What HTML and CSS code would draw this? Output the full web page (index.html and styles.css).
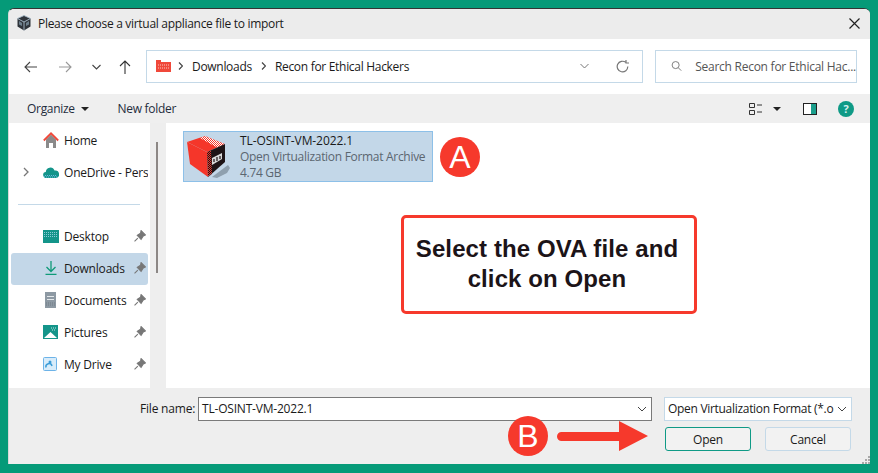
FILE: index.html
```html
<!DOCTYPE html>
<html lang="en">
<head>
    <meta charset="UTF-8">
    <title>Please choose a virtual appliance file to import</title>
    <link rel="stylesheet" href="styles.css">
</head>
<body>
    <div id="dialog">
        <div id="titlebar">
            <svg class="app-icon" width="16" height="16" viewBox="0 0 16 16">
                <path d="M8 .5l6.500 3v8L8 15.500 1.500 11.500v-8z" fill="#2f343a"/>
                <path d="M8 .5L1.500 3.500 8 7l6.500-3.500zM8 7v8.500" fill="none" stroke="#a9bccb" stroke-width=".9"/>
                <path d="M3 6l3 2v3L3 9.500zM13 6l-3 2v3l3-1.500z" fill="#6d7f8c"/>
            </svg>
            <span class="title">Please choose a virtual appliance file to import</span>
            <svg class="close" width="11" height="11" viewBox="0 0 11 11"><path d="M.5.5l10 10M10.500.5l-10 10" stroke="#222" stroke-width="1.200"/></svg>
        </div>

        <div id="navbar">
            <svg class="nav-btn back" width="13" height="12" viewBox="0 0 13 12"><path d="M13 6H1M6 1L1 6l5 5" fill="none" stroke="#444" stroke-width="1.100"/></svg>
            <svg class="nav-btn fwd" width="13" height="12" viewBox="0 0 13 12"><path d="M0 6h12M7 1l5 5-5 5" fill="none" stroke="#999" stroke-width="1.100"/></svg>
            <svg class="nav-btn down" width="9" height="6" viewBox="0 0 9 6"><path d="M.5 1l4 4 4-4" fill="none" stroke="#444" stroke-width="1.100"/></svg>
            <svg class="nav-btn up" width="12" height="14" viewBox="0 0 12 14"><path d="M6 14V1M1 6l5-5 5 5" fill="none" stroke="#333" stroke-width="1.100"/></svg>
            <div id="address">
                <svg class="addr-folder" width="15" height="12" viewBox="0 0 15 12"><path d="M0 0h5v2h10v10H0z" fill="#f0483a"/><path d="M2 5h11M2 8h11" stroke="#f7c9c2" stroke-dasharray="1 1"/></svg>
                <svg width="5" height="8" viewBox="0 0 5 8"><path d="M1 .5L4.500 4 1 7.500" fill="none" stroke="#444" stroke-width="1.200"/></svg>
                <span>Downloads</span>
                <svg width="5" height="8" viewBox="0 0 5 8"><path d="M1 .5L4.500 4 1 7.500" fill="none" stroke="#444" stroke-width="1.200"/></svg>
                <span>Recon for Ethical Hackers</span>
                <svg class="addr-down" width="9" height="6" viewBox="0 0 9 6"><path d="M.5 1l4 4 4-4" fill="none" stroke="#777" stroke-width="1"/></svg>
                <svg width="13" height="13" viewBox="0 0 13 13"><path d="M11.800 6.500a5.300 5.300 0 1 1-2-4.100M10 0v3H13" fill="none" stroke="#777" stroke-width="1.200"/></svg>
            </div>
            <div id="search">
                <svg width="12" height="12" viewBox="0 0 12 12"><circle cx="5" cy="5" r="3.800" fill="none" stroke="#777"/><path d="M7.800 7.800L11 11" stroke="#777"/></svg>
                <span>Search Recon for Ethical Hac...</span>
            </div>
        </div>

        <div id="toolbar">
            <span class="tool">Organize <i class="caret"></i></span>
            <span class="tool">New folder</span>
            <div class="tool-right">
                <svg width="13" height="12" viewBox="0 0 13 12"><path d="M.5.500h5v4h-5zM.5 7.500h5v4h-5zM8 2h5M8 9h5" fill="none" stroke="#333"/></svg>
                <i class="caret"></i>
                <svg class="pane" width="14" height="12" viewBox="0 0 14 12"><rect x=".5" y=".5" width="13" height="11" fill="#fff" stroke="#222"/><rect x="8" y="1" width="5" height="10" fill="#1a9e8c"/></svg>
                <svg class="help" width="16" height="16" viewBox="0 0 16 16"><circle cx="8" cy="8" r="8" fill="#0f9a86"/><text x="8" y="12" text-anchor="middle" class="help-mark">?</text></svg>
            </div>
        </div>

        <div id="body">
            <div id="sidebar">
                <div class="side-item">
                    <svg class="side-icon" width="16" height="16" viewBox="0 0 16 16"><path d="M3 7.500l5-5 5 5V16H10v-5H6v5H3z" fill="#8a8a8a"/><path d="M.8 8.500L8 1.300l7.200 7.200" fill="none" stroke="#f0483a" stroke-width="1.800"/></svg>
                    <span>Home</span>
                </div>
                <div class="side-item">
                    <svg class="expander" width="6" height="10" viewBox="0 0 6 10"><path d="M1 1l4 4-4 4" fill="none" stroke="#777" stroke-width="1.300"/></svg>
                    <svg class="side-icon" width="16" height="11" viewBox="0 0 16 11"><path d="M3.500 11a3 3 0 0 1-.7-6A4.500 4.500 0 0 1 11.500 3.500 3.800 3.800 0 0 1 13 11z" fill="#14958a"/><path d="M2 8.500h12M1 10h14" stroke="#6db8e0" stroke-dasharray="1 1"/></svg>
                    <span class="clip">OneDrive - Personal</span>
                </div>
                <div class="side-rule"></div>
                <div class="side-item">
                    <svg class="side-icon" width="16" height="13" viewBox="0 0 16 13"><rect width="16" height="13" fill="#14958a"/><path d="M1 2.500h14M1 4.500h14M1 6.500h14" stroke="#8cc9d8" stroke-dasharray="1 1"/></svg>
                    <span>Desktop</span>
                    <svg class="pin" width="12" height="12" viewBox="0 0 11 11"><path d="M6.500.5l4 4-2 1-2 3-3.500-3.500 3-2zM3.500 7.500L.5 10.500" fill="#777" stroke="#777"/></svg>
                </div>
                <div class="side-item active">
                    <svg class="side-icon narrow" width="12" height="14" viewBox="0 0 12 14"><path d="M6 0v10M1.500 6L6 10.500 10.500 6M.5 13.300h11" fill="none" stroke="#0f9a78" stroke-width="1.300"/></svg>
                    <span>Downloads</span>
                    <svg class="pin" width="12" height="12" viewBox="0 0 11 11"><path d="M6.500.5l4 4-2 1-2 3-3.500-3.500 3-2zM3.500 7.500L.5 10.500" fill="#777" stroke="#777"/></svg>
                </div>
                <div class="side-item">
                    <svg class="side-icon narrow" width="11" height="16" viewBox="0 0 11 16"><rect width="11" height="16" fill="#8d99a3"/><path d="M2 4.500h7M2 7.500h7" stroke="#e4e8ea"/><path d="M1 11h9M1 13h9" stroke="#6f7a84" stroke-dasharray="1 1"/></svg>
                    <span>Documents</span>
                    <svg class="pin" width="12" height="12" viewBox="0 0 11 11"><path d="M6.500.5l4 4-2 1-2 3-3.500-3.500 3-2zM3.500 7.500L.5 10.500" fill="#777" stroke="#777"/></svg>
                </div>
                <div class="side-item">
                    <svg class="side-icon" width="15" height="14" viewBox="0 0 15 14"><rect width="15" height="14" fill="#14958a"/><path d="M1 13l6.500-6 6.500 6z" fill="#fff"/><path d="M8 3h5M9 5h3" stroke="#bfe6e0" stroke-dasharray="1 1"/></svg>
                    <span>Pictures</span>
                    <svg class="pin" width="12" height="12" viewBox="0 0 11 11"><path d="M6.500.5l4 4-2 1-2 3-3.500-3.500 3-2zM3.500 7.500L.5 10.500" fill="#777" stroke="#777"/></svg>
                </div>
                <div class="side-item">
                    <svg class="side-icon" width="14" height="14" viewBox="0 0 14 14"><rect x=".5" y=".5" width="13" height="13" rx="1" fill="#d8ecfa" stroke="#6db3e8"/><path d="M3 10.500a3 3 0 0 1 6-1.500" fill="none" stroke="#3c9dd8" stroke-width="1.500"/><circle cx="7" cy="5" r="1.500" fill="#3c9dd8"/></svg>
                    <span>My Drive</span>
                    <svg class="pin" width="12" height="12" viewBox="0 0 11 11"><path d="M6.500.5l4 4-2 1-2 3-3.500-3.500 3-2zM3.500 7.500L.5 10.500" fill="#777" stroke="#777"/></svg>
                </div>
            </div>
            <div id="scrollbar"><div class="thumb"></div></div>
            <div id="files">
                <div class="file-row">
                    <svg class="file-icon" width="45" height="46" viewBox="185 135 45 46">
                        <defs>
                            <pattern id="dots" width="2" height="2" patternUnits="userSpaceOnUse">
                                <rect width="1" height="1" fill="#fff"/>
                                <rect x="1" y="1" width="1" height="1" fill="#fff"/>
                            </pattern>
                            <pattern id="reddots" width="2" height="2" patternUnits="userSpaceOnUse">
                                <rect width="1" height="1" fill="#e8392c"/>
                                <rect x="1" y="1" width="1" height="1" fill="#e8392c"/>
                            </pattern>
                        </defs>
                        <path d="M212 178l16-12 2 3-3 5-10 5z" fill="#8fa0ae"/>
                        <path d="M187 143l18-6 20 8-18 8z" fill="#f5362a"/>
                        <path d="M200 139l5-2 20 8-8 3.500z" fill="url(#dots)"/>
                        <path d="M187 143l20 10 1 25-18-13z" fill="#f5362a"/>
                        <path d="M207 153l18-8v18l-17 15z" fill="#1e1416"/>
                        <path d="M207 153l4-2 1 24-4 3z" fill="url(#reddots)"/>
                        <path d="M212 159l10-5v6l-10 6z" fill="#d8d8d8"/>
                        <path d="M214 160v3M217 158v4M220 157v3" stroke="#1e1416" stroke-width="1.200"/>
                    </svg>
                    <div class="file-text">
                        <div class="file-name">TL-OSINT-VM-2022.1</div>
                        <div class="file-meta">Open Virtualization Format Archive</div>
                        <div class="file-meta">4.74 GB</div>
                    </div>
                </div>
            </div>
        </div>

        <div id="footer">
            <div class="foot-row">
                <label>File name:</label>
                <div class="name-box">
                    <span>TL-OSINT-VM-2022.1</span>
                    <svg width="10" height="6" viewBox="0 0 10 6"><path d="M1 1l4 4 4-4" fill="none" stroke="#444" stroke-width="1"/></svg>
                </div>
                <div class="type-box">
                    <span>Open Virtualization Format (*.o</span>
                    <svg width="10" height="6" viewBox="0 0 10 6"><path d="M1 1l4 4 4-4" fill="none" stroke="#444" stroke-width="1"/></svg>
                </div>
            </div>
            <div class="foot-row buttons">
                <button class="btn primary">Open</button>
                <button class="btn">Cancel</button>
            </div>
        </div>

        <svg class="grip" width="8" height="8" viewBox="0 0 8 8"><path d="M6 0h2v2H6zM3 3h2v2H3zM6 3h2v2H6zM0 6h2v2H0zM3 6h2v2H3zM6 6h2v2H6z" fill="#a8a8a8"/></svg>

        <!-- annotations on top of the screenshot -->
        <div class="badge badge-a">A</div>
        <div class="note">Select the OVA file and click on Open</div>
        <div class="badge badge-b">B</div>
        <svg class="arrow" width="91" height="30" viewBox="0 0 91 30"><path d="M4.500 11H62V0l29 15-29 15V20H4.500a4.500 4.500 0 0 1 0-9z" fill="#f6392c"/></svg>
    </div>
</body>
</html>
```

FILE: styles.css
```css
html, body { margin: 0; padding: 0; height: 100%; }
body {
    background: #059a78;
    font-family: "Open Sans", "Noto Sans", sans-serif;
    font-size: 12px;
    color: #1a1a1a;
    overflow: hidden;
}

#dialog {
    position: relative;
    margin: 8px 8px 0;
    width: 862px;
    height: 456px;
    box-sizing: border-box;
    border-top: 1px solid #333;
    border-left: 1px solid #d8d8d8;
    border-radius: 6px 6px 0 0;
    background: #eeeeee;
    display: flex;
    flex-direction: column;
    overflow: hidden;
}

#titlebar {
    height: 30px;
    flex: none;
    box-sizing: border-box;
    display: flex;
    align-items: center;
    padding: 0 10px 2px 7px;
    background: #ececec;
}
.app-icon { margin-right: 6px; }
.title { flex: 1; letter-spacing: -0.3px; }

#navbar {
    height: 55px;
    flex: none;
    display: flex;
    align-items: center;
    background: #fff;
    padding-left: 15px;
}
.nav-btn { flex: none; }
.fwd { margin-left: 22px; }
.down { margin-left: 20px; }
.up { margin-left: 18px; }

#address, #search {
    height: 33px;
    box-sizing: border-box;
    border: 1px solid #c4d9e8;
    display: flex;
    align-items: center;
    flex: none;
    margin-top: -1px;
    letter-spacing: -0.3px;
    white-space: nowrap;
}
#address {
    width: 497px;
    margin-left: 15px;
    padding: 0 13px 0 9px;
    gap: 9px;
}
.addr-folder { margin-right: -2px; }
.addr-down { margin-left: auto; margin-right: 18px; }
#search {
    width: 202px;
    margin-left: 12px;
    padding-left: 15px;
    gap: 13px;
    color: #555;
    letter-spacing: -0.25px;
}

#toolbar {
    height: 29px;
    flex: none;
    display: flex;
    align-items: center;
    background: #efefef;
    padding-left: 18px;
}
.tool { margin-right: 29px; letter-spacing: -0.3px; color: #1f2d3d; }
.caret {
    display: inline-block;
    border-left: 4px solid transparent;
    border-right: 4px solid transparent;
    border-top: 4px solid #222;
    margin-left: 3px;
    vertical-align: 2px;
}
.tool-right {
    margin-left: auto;
    display: flex;
    align-items: center;
    margin-right: 16px;
}
.tool-right .caret { margin-left: 11px; vertical-align: 0; }
.pane { margin-left: 22px; }
.help { margin-left: 21px; }
.help-mark { font-size: 11px; font-weight: bold; fill: #d8f0ee; }

#body {
    flex: 1;
    min-height: 0;
    display: flex;
    background: #fff;
}
#sidebar {
    width: 141px;
    flex: none;
    padding: 2px 2px 0;
    box-sizing: border-box;
    overflow: hidden;
}
.side-item {
    height: 32px;
    box-sizing: border-box;
    display: flex;
    align-items: center;
    position: relative;
    padding: 0 0 2px 33px;
    white-space: nowrap;
    letter-spacing: -0.2px;
    border-radius: 3px;
}
.side-item.active { background: #c3d7e8; }
.side-icon { position: absolute; left: 32px; }
.side-icon.narrow { left: 34px; }
.side-item span { margin-left: 20px; }
.clip { overflow: hidden; width: 84px; flex: none; }
.expander { position: absolute; left: 12px; }
.pin { position: absolute; left: 123px; }
.side-rule {
    height: 1px;
    background: #c4d9e8;
    margin: 15px 8px 16px 7px;
}

#scrollbar {
    width: 16px;
    flex: none;
    background: #eeeeee;
}
.thumb {
    width: 2px;
    height: 131px;
    margin: 19px 0 0 6px;
    background: #8c8785;
}

#files {
    flex: 1;
    padding: 8px 0 0 16px;
    margin-left: 1px;
}
.file-row {
    width: 250px;
    height: 51px;
    box-sizing: border-box;
    border: 1px solid #8dc0e8;
    background: #c3d7e8;
    display: flex;
    align-items: center;
    padding-left: 1px;
}
.file-icon { flex: none; }
.file-text { margin-left: 10px; padding-top: 1px; line-height: 16px; white-space: nowrap; letter-spacing: -0.3px; }
.file-name { letter-spacing: -0.1px; }
.file-meta { color: #5b6670; }

#footer {
    height: 76px;
    flex: none;
    background: #eeeeee;
    padding-top: 9px;
    box-sizing: border-box;
}
.foot-row { display: flex; align-items: center; }
.foot-row label { margin: -2px 0 0 131px; width: 58px; letter-spacing: -0.2px; }
.name-box, .type-box {
    height: 24px;
    box-sizing: border-box;
    background: #fff;
    display: flex;
    align-items: center;
    justify-content: space-between;
    white-space: nowrap;
}
.name-box {
    width: 454px;
    border: 1px solid #7a7a7a;
    padding: 0 4px 1px 3px;
    letter-spacing: -0.2px;
}
.type-box {
    width: 188px;
    margin-left: 12px;
    border: 1px solid #c4d9e8;
    padding: 0 4px 1px 3px;
    letter-spacing: -0.3px;
}
.buttons { margin-top: 6px; padding-left: 656px; gap: 14px; }
.btn {
    width: 86px;
    height: 24px;
    padding: 0;
    font: inherit;
    letter-spacing: -0.2px;
    color: #1a1a1a;
    background: #f2f2f2;
    border: 1px solid #c4d9e8;
    border-radius: 3px;
}
.btn.primary { border-color: #0f9a86; }

.grip { position: absolute; right: 0; bottom: 0; }

.badge {
    position: absolute;
    width: 40px;
    height: 40px;
    border-radius: 50%;
    background: #f6392c;
    color: #fff;
    font-family: "Liberation Sans", Arial, sans-serif;
    font-size: 32px;
    line-height: 40px;
    text-align: center;
}
.badge-a { left: 431px; top: 128px; }
.badge-b { left: 499px; top: 407px; }
.arrow { position: absolute; left: 548px; top: 412px; }
.note {
    position: absolute;
    left: 392px;
    top: 206px;
    width: 296px;
    height: 99px;
    box-sizing: border-box;
    border: 3px solid #f6392c;
    border-radius: 5px;
    background: #fff;
    padding: 0 9px 2px 5px;
    display: flex;
    align-items: center;
    text-align: center;
    font-family: "Liberation Sans", Arial, sans-serif;
    font-weight: bold;
    font-size: 24px;
    letter-spacing: 0.1px;
    line-height: 30px;
    color: #1c1418;
}
```
